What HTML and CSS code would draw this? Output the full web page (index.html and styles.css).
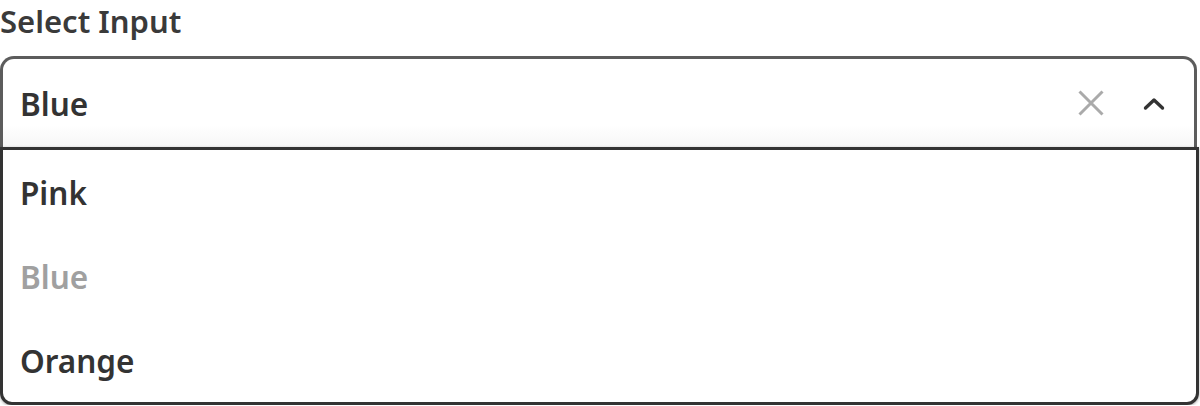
FILE: index.html
```html
<!DOCTYPE html>
<html lang="en">
<head>
<meta charset="utf-8">
<title>Select Input</title>
<link rel="stylesheet" href="styles.css">
</head>
<body>
<div class="field">
  <div class="label">Select Input</div>
  <div class="control">
    <div class="value">Blue</div>
    <svg class="icon-clear" width="28" height="28" viewBox="0 0 28 28" aria-hidden="true">
      <path d="M2.5 2.5 L25.5 25.5 M25.5 2.5 L2.5 25.5" stroke="#aaaaaa" stroke-width="3" fill="none"/>
    </svg>
    <svg class="icon-chevron" width="24" height="16" viewBox="0 0 24 16" aria-hidden="true">
      <polyline points="3.5,13 12,5 20.5,13" stroke="#333333" stroke-width="3.4" fill="none" stroke-linecap="round" stroke-linejoin="round"/>
    </svg>
  </div>
  <div class="menu">
    <div class="option">Pink</div>
    <div class="option option-disabled">Blue</div>
    <div class="option">Orange</div>
  </div>
</div>
</body>
</html>
```

FILE: styles.css
```css
html, body {
  margin: 0;
  padding: 0;
  background: #ffffff;
}

body {
  font-family: "Noto Sans", "Open Sans", "Liberation Sans", sans-serif;
  color: #333333;
}

.field {
  width: 1200px;
}

.label {
  font-size: 31px;
  font-weight: 600;
  line-height: 42px;
  height: 42px;
  margin-bottom: 14px;
  color: #3a3a3a;
}

.control {
  box-sizing: border-box;
  width: 1197px;
  height: 91px;
  border: 3px solid #5c5c5c;
  border-bottom: none;
  border-radius: 14px 14px 0 0;
  display: flex;
  align-items: center;
  padding: 0 28px 0 17px;
  background: linear-gradient(to bottom, #ffffff 0%, #ffffff 75%, #f6f6f6 100%);
}

.value {
  flex: 1;
  font-size: 31.5px;
  font-weight: 600;
  color: #333333;
}

.icon-clear {
  display: block;
  margin-right: 37px;
}

.icon-chevron {
  display: block;
}

.menu {
  box-sizing: border-box;
  width: 1199px;
  border: 3px solid #333333;
  border-radius: 0 0 12px 12px;
  background: #ffffff;
  box-shadow: 0 1px 3px rgba(0, 0, 0, 0.35);
}

.option {
  height: 84px;
  display: flex;
  align-items: center;
  padding-left: 17px;
  font-size: 31.5px;
  font-weight: 600;
  color: #333333;
}

.option-disabled {
  color: #a0a0a0;
}
```
